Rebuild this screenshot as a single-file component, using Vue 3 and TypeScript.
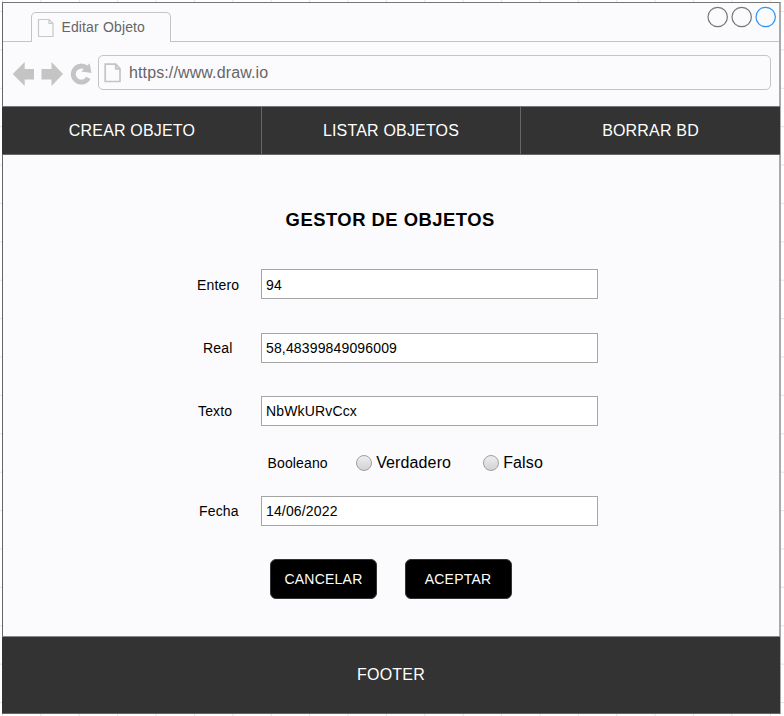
<script setup lang="ts">
interface Field {
  id: string
  label: string
  value: string
}

const tabs: string[] = ['CREAR OBJETO', 'LISTAR OBJETOS', 'BORRAR BD']
const topFields: Field[] = [
  { id: 'entero', label: 'Entero', value: '94' },
  { id: 'real', label: 'Real', value: '58,48399849096009' },
  { id: 'texto', label: 'Texto', value: 'NbWkURvCcx' },
]
const options: string[] = ['Verdadero', 'Falso']
</script>

<template>
  <div class="canvas">
    <main class="window">
      <header class="chrome">
        <div class="tab-bar">
          <div class="tab-lead"></div>
          <div class="tab">
            <svg class="tab-page" width="17" height="20" viewBox="0 0 17 20">
              <path d="M1.5.5H12L16 4.5V17.5H1.5ZM12 .5V4.5H16" />
            </svg>
            <span>Editar Objeto</span>
          </div>
          <div class="tab-rest">
            <svg width="70" height="22" viewBox="0 0 70 22" class="controls">
              <circle cx="10.7" cy="11" r="9.7" />
              <circle cx="34.7" cy="11" r="9.7" />
              <circle class="blue" cx="58.7" cy="11" r="9.7" />
            </svg>
          </div>
        </div>
        <div class="address-bar">
          <svg class="nav-icons" width="82" height="26" viewBox="0 0 82 26">
            <path d="M.7 13L12.7 1V8H22V18.5H12.7V25Z" />
            <path d="M51 13L39.5 1V8H29.5V18.5H39.5V25Z" />
            <path class="reload" d="M76.4 16.8A8 8 0 1 1 74.5 7" />
            <path d="M77.7 2.3L79.5 12L69.3 10.6Z" />
          </svg>
          <div class="address">
            <svg width="18" height="20" viewBox="0 0 18 20">
              <path d="M1.2 1.2H11.7L16 5.8V18.5H1.2ZM11.7 1.2V5.8H16" />
            </svg>
            <span>https://www.draw.io</span>
          </div>
        </div>
      </header>
      <nav class="menu">
        <a v-for="tab in tabs" :key="tab">{{ tab }}</a>
      </nav>
      <section class="content">
        <h1>GESTOR DE OBJETOS</h1>
        <div v-for="field in topFields" :key="field.id" class="row" :class="field.id">
          <label>{{ field.label }}</label>
          <div class="input">{{ field.value }}</div>
        </div>
        <div class="booleans">
          <span class="caption">Booleano</span>
          <span v-for="option in options" :key="option" class="option">
            <i class="radio"></i>{{ option }}
          </span>
        </div>
        <div class="row fecha">
          <label>Fecha</label>
          <div class="input">14/06/2022</div>
        </div>
        <div class="actions">
          <button type="button" class="cancel">CANCELAR</button>
          <button type="button">ACEPTAR</button>
        </div>
      </section>
      <footer>FOOTER</footer>
    </main>
  </div>
</template>

<style>
body {
  margin: 0;
  overflow: hidden;
}
</style>

<style scoped>
* {
  box-sizing: border-box;
}
.canvas {
  width: 784px;
  height: 716px;
  padding: 2px 0 0 2px;
  font-family: "Liberation Sans", Arial, sans-serif;
  color: #000;
  background-color: #fff;
  background-image:
    linear-gradient(90deg, #e2e2e2 1px, transparent 1px),
    linear-gradient(#e2e2e2 1px, transparent 1px);
  background-size: 38.4px 38.4px;
  background-position: 2px 11px;
}
.window {
  display: flex;
  flex-direction: column;
  width: 779px;
  height: 712px;
  border: 1px solid #666;
  border-top-color: #777;
  border-right: 2px solid #aaa;
  background: #fbfbfe;
}
.chrome {
  height: 103px;
}
.tab-bar {
  display: flex;
  height: 39px;
}
.tab-lead {
  width: 28px;
  border-bottom: 1px solid #c4c4c4;
}
.tab {
  display: flex;
  align-items: flex-start;
  width: 140px;
  height: 30px;
  margin-top: 9px;
  padding: 6px 0 0 5px;
  border: 1px solid #c4c4c4;
  border-bottom: 0;
  border-radius: 5px 5px 0 0;
  color: #666;
  font-size: 14px;
  line-height: 17px;
}
.tab span {
  margin-left: 7.4px;
  letter-spacing: 0.15px;
}
.tab-page {
  fill: none;
  stroke: #c8c8c8;
  stroke-width: 1.2;
}
.tab-rest {
  display: flex;
  flex: 1;
  justify-content: flex-end;
  padding: 3px 2px 0 0;
  border-bottom: 1px solid #c4c4c4;
}
.controls circle {
  fill: none;
  stroke: #777;
  stroke-width: 1.2;
}
.controls circle.blue {
  stroke: #2a94f4;
}
.address-bar {
  display: flex;
  padding: 13px 8px 0 9px;
}
.nav-icons {
  margin-top: 6px;
  fill: #c4c4c4;
}
.nav-icons .reload {
  fill: none;
  stroke: #c4c4c4;
  stroke-width: 5;
}
.address {
  display: flex;
  flex: 1;
  align-items: flex-start;
  height: 35px;
  margin-left: 4px;
  padding: 7px 5px;
  border: 1px solid #c4c4c4;
  border-radius: 5px;
  color: #666;
  font-size: 16px;
  line-height: 20px;
}
.address svg {
  fill: none;
  stroke: #c4c4c4;
  stroke-width: 1.7;
}
.address span {
  margin-left: 7px;
  letter-spacing: 0.12px;
}
.menu {
  display: grid;
  grid-template-columns: 259px 259px 260px;
  height: 49px;
  margin-right: -1px;
  margin-left: -1px;
  border-top: 1px solid #777;
  border-bottom: 1px solid #666;
  background: #333;
  color: #fff;
  font-size: 16px;
  letter-spacing: 0.18px;
}
.menu a {
  display: flex;
  align-items: center;
  justify-content: center;
  border-left: 1px solid #666;
}
.menu a:first-child {
  border-color: #333;
}
.content {
  height: 481px;
  padding-top: 53px;
}
h1 {
  height: 22px;
  margin: 0 0 39px 282.6px;
  font-size: 18.4px;
  line-height: 23px;
  letter-spacing: 0.5px;
}
.row {
  display: flex;
  height: 30px;
  margin-bottom: 33.5px;
  font-size: 14px;
  letter-spacing: 0.15px;
}
.row label {
  width: 64px;
  margin-left: 194px;
  line-height: 31px;
}
.row.entero label,
.row.entero .input {
  line-height: 32px;
}
.row.entero .input {
  line-height: 30px;
}
.row.real label {
  width: 58px;
  margin-left: 200px;
}
.row.texto label {
  width: 63px;
  margin-left: 195px;
}
.row.fecha label {
  width: 62px;
  margin-left: 196px;
}
.row.fecha {
  margin-bottom: 33px;
}
.row.texto {
  margin-bottom: 26px;
}
.input {
  width: 337px;
  height: 30px;
  padding-left: 4px;
  border: 1px solid #a5a5a5;
  background: #fff;
  line-height: 29px;
}
.booleans {
  display: flex;
  align-items: center;
  height: 22px;
  margin: 0 0 22px 264.6px;
  font-size: 16px;
  letter-spacing: 0.12px;
}
.caption {
  width: 88px;
  font-size: 14px;
}
.option {
  display: flex;
  align-items: center;
  width: 127px;
}
.radio {
  width: 16px;
  height: 16px;
  margin-right: 4.6px;
  border: 1px solid #a0a0a0;
  border-radius: 50%;
  background: linear-gradient(#eee, #d2d2d2);
}
.actions {
  display: flex;
  gap: 27.5px;
  padding-left: 267px;
}
button {
  width: 107px;
  height: 40px;
  padding: 0;
  border: 1px solid #333;
  border-radius: 6px;
  background: #000;
  color: #fff;
  font: 14px "Liberation Sans", Arial, sans-serif;
  letter-spacing: 0.22px;
}
footer {
  display: flex;
  align-items: center;
  justify-content: center;
  height: 78px;
  margin: 0 -1px -1px;
  border-top: 1px solid #888;
  border-bottom: 1px solid #666;
  background: #333;
  color: #fff;
  font-size: 16px;
  letter-spacing: 0.2px;
}
</style>
